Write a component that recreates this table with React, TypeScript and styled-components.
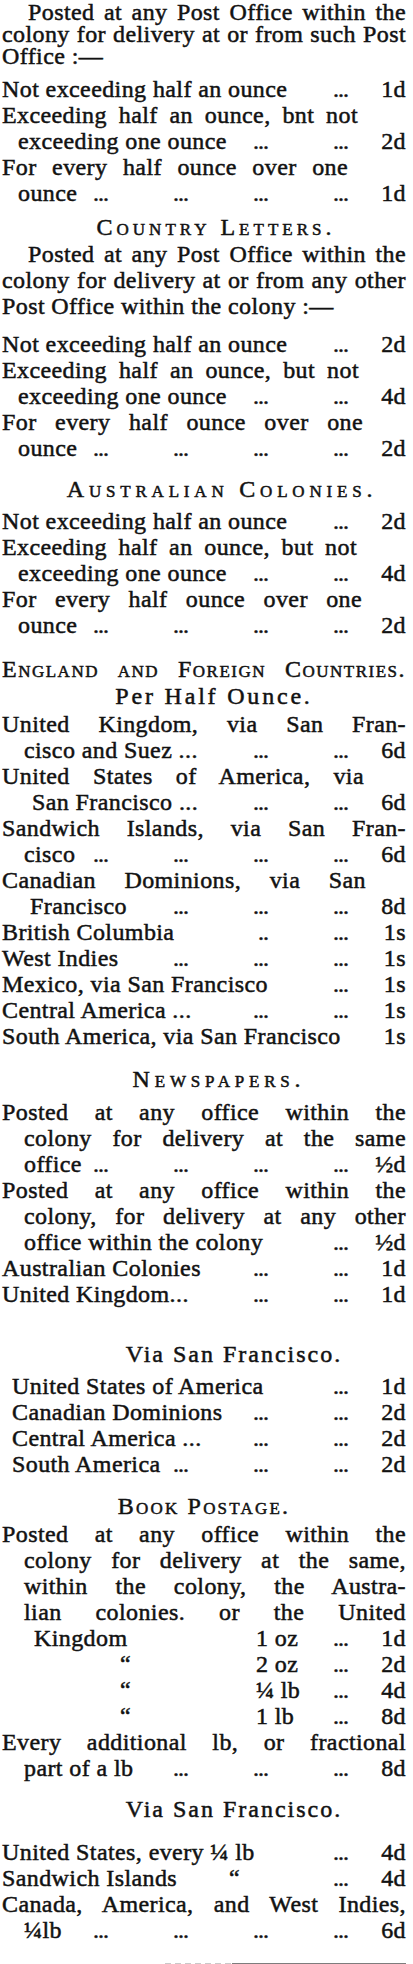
import React from "react";
import styled, { createGlobalStyle, css } from "styled-components";

const GlobalStyle = createGlobalStyle`
  html, body { margin: 0; padding: 0; background: #ffffff; }
  body {
    font-family: "Liberation Serif", "Times New Roman", serif;
    color: #121212;
  }
`;

const Column = styled.article`
  width: 413px;
  box-sizing: border-box;
  padding: 1px 7px 2px 2px;
  font-size: 24px;
  line-height: 26px;
  letter-spacing: 0.4px;
  -webkit-text-stroke: 0.5px #121212;
`;

const Block = styled.section<{ $mt?: number; $leading?: number; $indent?: number }>`
  margin-top: ${(p) => p.$mt ?? 0}px;
  padding-left: ${(p) => p.$indent ?? 0}px;
  ${(p) =>
    p.$leading &&
    css`
      line-height: ${p.$leading}px;
    `}
`;

const Heading = styled.h2<{ $spacing?: number; $caps?: boolean; $justify?: boolean; $mt?: number; $shift?: number }>`
  margin: ${(p) => p.$mt ?? 0}px 0 0;
  padding-left: ${(p) => p.$shift ?? 0}px;
  font: inherit;
  font-weight: normal;
  font-variant: ${(p) => (p.$caps ? "small-caps" : "normal")};
  letter-spacing: ${(p) => p.$spacing ?? 0.4}px;
  text-align: ${(p) => (p.$justify ? "justify" : "center")};
  text-align-last: ${(p) => (p.$justify ? "justify" : "center")};
`;

const TextLine = styled.div<{ $indent?: number; $inset?: number; $justify?: boolean }>`
  padding-left: ${(p) => p.$indent ?? 0}px;
  padding-right: ${(p) => p.$inset ?? 0}px;
  text-align: ${(p) => (p.$justify ? "justify" : "left")};
  text-align-last: ${(p) => (p.$justify ? "justify" : "auto")};
`;

const Row = styled.div<{ $indent?: number }>`
  display: flex;
  align-items: baseline;
  padding-left: ${(p) => p.$indent ?? 0}px;
`;

const Label = styled.span`
  flex: none;
  white-space: nowrap;
`;

const Ditto = styled.span<{ $gap?: number }>`
  margin-left: ${(p) => p.$gap ?? 0}px;
`;

const Leaders = styled.span`
  flex: 1 1 auto;
  min-width: 0;
  display: flex;
  justify-content: flex-end;
`;

const Dots = styled.span<{ $w?: number }>`
  flex: none;
  width: ${(p) => p.$w ?? 80}px;
  text-align: right;
  letter-spacing: -1px;
`;

const Weight = styled.span`
  flex: none;
  width: 58px;
  margin-left: auto;
  white-space: nowrap;
`;

const Price = styled.span`
  flex: none;
  width: 58px;
  text-align: right;
`;

const Rule = styled.div`
  margin: 20px 0 0 163px;
  height: 2px;
  background:
    linear-gradient(to right, transparent 0 28%, #7d7d7d 28% 100%),
    repeating-linear-gradient(to right, #c9c9c9 0 6px, transparent 6px 10px);
`;

type RateProps = {
  label: React.ReactNode;
  dots?: number | string[];
  price: string;
  indent?: number;
};

function Rate({ label, dots = 0, price, indent }: RateProps) {
  const list = typeof dots === "number" ? Array.from({ length: dots }, () => "...") : dots;
  return (
    <Row $indent={indent}>
      <Label>{label}</Label>
      <Leaders>
        {list.map((d, i) => (
          <Dots key={i}>{d}</Dots>
        ))}
      </Leaders>
      <Price>{price}</Price>
    </Row>
  );
}

function WeightRate({ label, indent, weight, price }: { label: React.ReactNode; indent?: number; weight: string; price: string }) {
  return (
    <Row $indent={indent}>
      <Label>{label}</Label>
      <Weight>{weight}</Weight>
      <Dots $w={34}>...</Dots>
      <Price>{price}</Price>
    </Row>
  );
}

function OunceRates({ first, second, third, continued, insets }: { first: string; second: string; third: string; continued: string; insets: [number, number] }) {
  return (
    <>
      <Rate label="Not exceeding half an ounce" dots={1} price={first} />
      <TextLine $justify $inset={insets[0]}>{continued}</TextLine>
      <Rate indent={16} label="exceeding one ounce" dots={2} price={second} />
      <TextLine $justify $inset={insets[1]}>For every half ounce over one</TextLine>
      <Rate indent={16} label="ounce" dots={4} price={third} />
    </>
  );
}

export default function App() {
  return (
    <>
      <GlobalStyle />
      <Column>
        <Block $leading={22}>
          <TextLine $indent={26} $justify>Posted at any Post Office within the</TextLine>
          <TextLine $justify>colony for delivery at or from such Post</TextLine>
          <TextLine>Office :—</TextLine>
        </Block>
        <Block $mt={9}>
          <OunceRates first="1d" second="2d" third="1d" continued="Exceeding half an ounce, bnt not" insets={[48, 58]} />
        </Block>

        <Heading $caps $spacing={4} $shift={24} $mt={8}>Country Letters.</Heading>
        <Block $mt={1}>
          <TextLine $indent={26} $justify>Posted at any Post Office within the</TextLine>
          <TextLine $justify>colony for delivery at or from any other</TextLine>
          <TextLine>Post Office within the colony :—</TextLine>
        </Block>
        <Block $mt={12}>
          <OunceRates first="2d" second="4d" third="2d" continued="Exceeding half an ounce, but not" insets={[47, 43]} />
        </Block>

        <Heading $caps $spacing={4.8} $shift={36} $mt={15}>Australian Colonies.</Heading>
        <Block $mt={6}>
          <OunceRates first="2d" second="4d" third="2d" continued="Exceeding half an ounce, but not" insets={[49, 44]} />
        </Block>

        <Heading $caps $justify $spacing={1.5} $mt={18}>England and Foreign Countries.</Heading>
        <Heading $spacing={2.8} $shift={20} $mt={1}>Per Half Ounce.</Heading>
        <Block $mt={2}>
          <TextLine $justify>United Kingdom, via San Fran-</TextLine>
          <Rate indent={22} label="cisco and Suez ..." dots={2} price="6d" />
          <TextLine $justify $inset={42}>United States of America, via</TextLine>
          <Rate indent={30} label="San Francisco ..." dots={2} price="6d" />
          <TextLine $justify>Sandwich Islands, via San Fran-</TextLine>
          <Rate indent={22} label="cisco" dots={4} price="6d" />
          <TextLine $justify $inset={40}>Canadian Dominions, via San</TextLine>
          <Rate indent={28} label="Francisco" dots={3} price="8d" />
          <Rate label="British Columbia" dots={["..", "..."]} price="1s" />
          <Rate label="West Indies" dots={3} price="1s" />
          <Rate label="Mexico, via San Francisco" dots={1} price="1s" />
          <Rate label="Central America ..." dots={2} price="1s" />
          <Rate label="South America, via San Francisco" price="1s" />
        </Block>

        <Heading $caps $spacing={4.8} $shift={30} $mt={17}>Newspapers.</Heading>
        <Block $mt={7}>
          <TextLine $justify>Posted at any office within the</TextLine>
          <TextLine $justify $indent={22}>colony for delivery at the same</TextLine>
          <Rate indent={22} label="office" dots={4} price="½d" />
          <TextLine $justify>Posted at any office within the</TextLine>
          <TextLine $justify $indent={22}>colony, for delivery at any other</TextLine>
          <Rate indent={22} label="office within the colony" dots={1} price="½d" />
          <Rate label="Australian Colonies" dots={2} price="1d" />
          <Rate label="United Kingdom..." dots={2} price="1d" />
        </Block>

        <Heading $spacing={2} $shift={60} $mt={34}>Via San Francisco.</Heading>
        <Block $mt={6} $indent={10}>
          <Rate label="United States of America" dots={1} price="1d" />
          <Rate label="Canadian Dominions" dots={2} price="2d" />
          <Rate label="Central America ..." dots={2} price="2d" />
          <Rate label="South America" dots={3} price="2d" />
        </Block>

        <Heading $caps $spacing={2.2} $mt={16}>Book Postage.</Heading>
        <Block $mt={2}>
          <TextLine $justify>Posted at any office within the</TextLine>
          <TextLine $justify $indent={22}>colony for delivery at the same,</TextLine>
          <TextLine $justify $indent={22}>within the colony, the Austra-</TextLine>
          <TextLine $justify $indent={22}>lian colonies. or the United</TextLine>
          <WeightRate indent={32} label="Kingdom" weight="1 oz" price="1d" />
          <WeightRate indent={118} label="“" weight="2 oz" price="2d" />
          <WeightRate indent={118} label="“" weight="¼ lb" price="4d" />
          <WeightRate indent={118} label="“" weight="1 lb" price="8d" />
          <TextLine $justify>Every additional lb, or fractional</TextLine>
          <Rate indent={22} label="part of a lb" dots={3} price="8d" />
        </Block>

        <Heading $spacing={2} $shift={60} $mt={15}>Via San Francisco.</Heading>
        <Block $mt={17}>
          <Rate label="United States, every ¼ lb" dots={1} price="4d" />
          <Rate
            label={
              <>
                Sandwich Islands<Ditto $gap={52}>“</Ditto>
              </>
            }
            dots={1}
            price="4d"
          />
          <TextLine $justify>Canada, America, and West Indies,</TextLine>
          <Rate indent={22} label="¼lb" dots={4} price="6d" />
        </Block>
        <Rule />
      </Column>
    </>
  );
}
